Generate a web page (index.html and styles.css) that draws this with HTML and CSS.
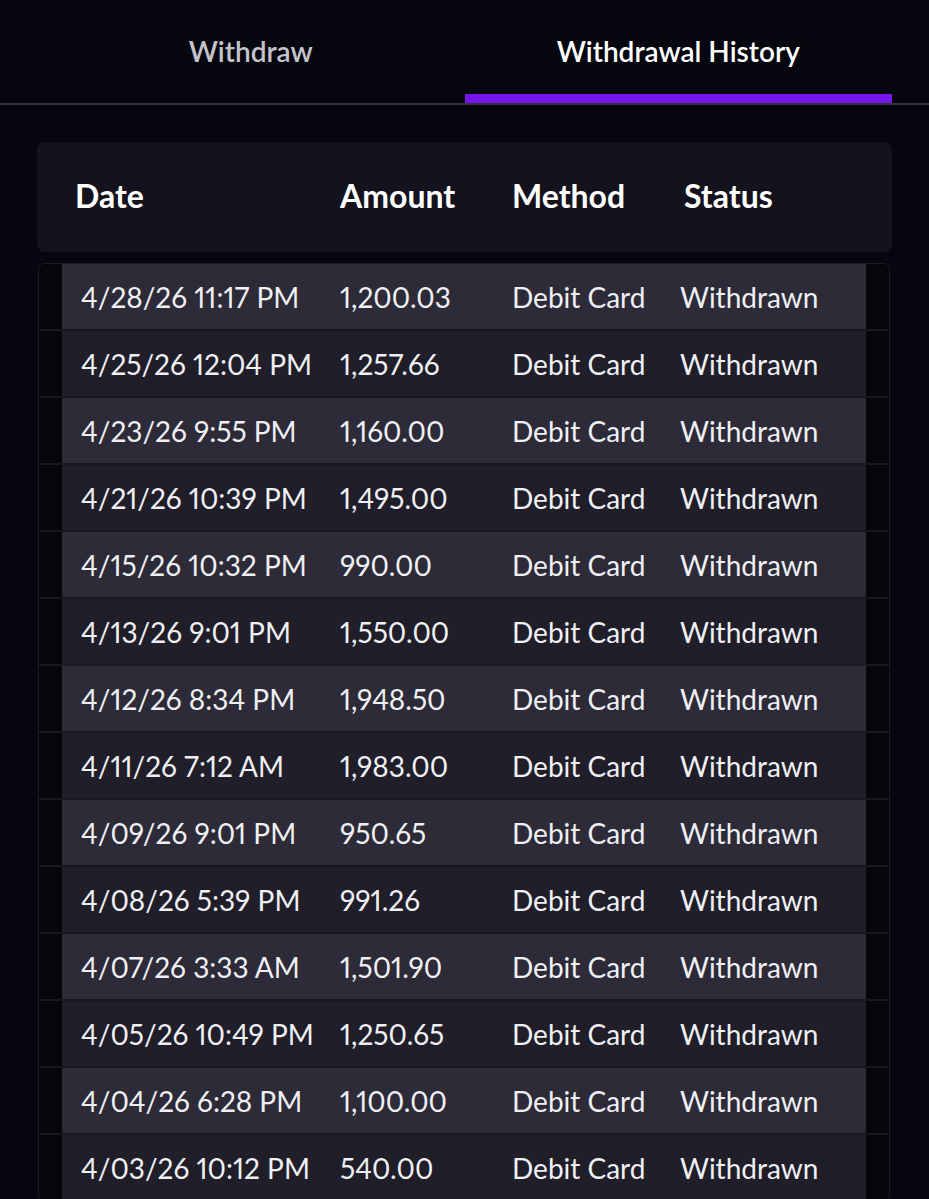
FILE: index.html
```html
<!DOCTYPE html>
<html lang="en">
<head>
  <meta charset="UTF-8" />
  <meta name="viewport" content="width=device-width, initial-scale=1.0"/>
  <title>Withdrawal History</title>
  <link rel="stylesheet" href="styles.css">
</head>
<body>
  <nav class="tabs">
    <div class="tab">Withdraw</div>
    <div class="tab active">Withdrawal History</div>
  </nav>

  <div class="container">
    <div class="table-head">
      <div>Date</div>
      <div>Amount</div>
      <div>Method</div>
      <div>Status</div>
    </div>

    <div class="table-body">
      <div class="row"><div class="cells"><div>4/28/26 11:17 PM</div><div>1,200.03</div><div>Debit Card</div><div>Withdrawn</div></div></div>
      <div class="row"><div class="cells"><div>4/25/26 12:04 PM</div><div>1,257.66</div><div>Debit Card</div><div>Withdrawn</div></div></div>
      <div class="row"><div class="cells"><div>4/23/26 9:55 PM</div><div>1,160.00</div><div>Debit Card</div><div>Withdrawn</div></div></div>
      <div class="row"><div class="cells"><div>4/21/26 10:39 PM</div><div>1,495.00</div><div>Debit Card</div><div>Withdrawn</div></div></div>
      <div class="row"><div class="cells"><div>4/15/26 10:32 PM</div><div>990.00</div><div>Debit Card</div><div>Withdrawn</div></div></div>
      <div class="row"><div class="cells"><div>4/13/26 9:01 PM</div><div>1,550.00</div><div>Debit Card</div><div>Withdrawn</div></div></div>
      <div class="row"><div class="cells"><div>4/12/26 8:34 PM</div><div>1,948.50</div><div>Debit Card</div><div>Withdrawn</div></div></div>
      <div class="row"><div class="cells"><div>4/11/26 7:12 AM</div><div>1,983.00</div><div>Debit Card</div><div>Withdrawn</div></div></div>
      <div class="row"><div class="cells"><div>4/09/26 9:01 PM</div><div>950.65</div><div>Debit Card</div><div>Withdrawn</div></div></div>
      <div class="row"><div class="cells"><div>4/08/26 5:39 PM</div><div>991.26</div><div>Debit Card</div><div>Withdrawn</div></div></div>
      <div class="row"><div class="cells"><div>4/07/26 3:33 AM</div><div>1,501.90</div><div>Debit Card</div><div>Withdrawn</div></div></div>
      <div class="row"><div class="cells"><div>4/05/26 10:49 PM</div><div>1,250.65</div><div>Debit Card</div><div>Withdrawn</div></div></div>
      <div class="row"><div class="cells"><div>4/04/26 6:28 PM</div><div>1,100.00</div><div>Debit Card</div><div>Withdrawn</div></div></div>
      <div class="row"><div class="cells"><div>4/03/26 10:12 PM</div><div>540.00</div><div>Debit Card</div><div>Withdrawn</div></div></div>
    </div>
  </div>
</body>
</html>
```

FILE: styles.css
```css
* {
  box-sizing: border-box;
  font-family: 'Lato', 'Liberation Sans', sans-serif;
}
body {
  margin: 0;
  background: #06060f;
  color: #f2f2f5;
  overflow: hidden;
}
.tabs {
  display: flex;
  padding: 0 37px;
  border-bottom: 2px solid #34333f;
}
.tab {
  flex: 1;
  text-align: center;
  font-size: 28px;
  font-weight: 600;
  color: #c4c4cc;
  padding-top: 34px;
  height: 103px;
  border-bottom: 9px solid transparent;
}
.tab.active {
  color: #ffffff;
  border-bottom-color: #7616ee;
}
.container {
  padding: 37px 37px 0;
}
.table-head {
  display: grid;
  grid-template-columns: 265px 172px 172px 1fr;
  align-items: center;
  height: 110px;
  padding-left: 38px;
  padding-bottom: 4px;
  background: #14131d;
  border-radius: 8px;
  font-size: 32px;
  font-weight: bold;
  color: #ffffff;
}
.table-body {
  margin: 11px 2px 0 1px;
  border: 1px solid #1a1a24;
  border-radius: 6px;
  background: #05050c;
  overflow: hidden;
}
.row {
  border-top: 2px solid #181820;
}
.row:first-child {
  border-top: none;
}
.cells {
  display: grid;
  grid-template-columns: 259px 172px 168px 1fr;
  align-items: center;
  height: 65px;
  margin: 0 23px;
  padding-left: 19px;
  font-size: 28px;
  font-variant-numeric: proportional-nums;
  color: #f0f0f4;
  background: #1f1e29;
}
.row:nth-child(odd) .cells {
  background: #2c2b37;
}
```
